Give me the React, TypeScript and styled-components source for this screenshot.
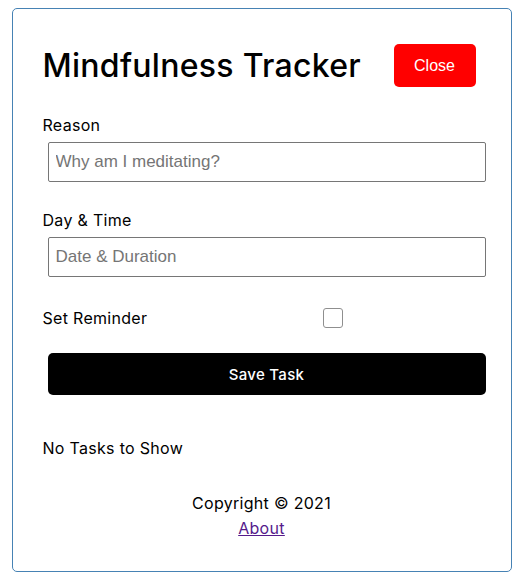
import React from "react";
import styled, { createGlobalStyle } from "styled-components";

const GlobalStyle = createGlobalStyle`
  * { box-sizing: border-box; }
  body {
    margin: 0;
    background: #ffffff;
    font-family: Inter, "Open Sans", sans-serif;
    color: #000000;
  }
`;

const Container = styled.div`
  width: 500px;
  margin: 8px auto 0;
  border: 1px solid steelblue;
  border-radius: 5px;
  padding: 30px;
`;

const Header = styled.header`
  display: flex;
  justify-content: space-between;
  align-items: center;
  height: 43px;
  margin: 5px 0 26px;
`;

const Title = styled.h1`
  margin: 0;
  font-size: 32px;
  font-weight: 500;
  line-height: 43px;
  letter-spacing: 0.28px;
`;

const Button = styled.button<{ $bg: string; $block?: boolean }>`
  border: none;
  border-radius: 5px;
  background: ${(p) => p.$bg};
  color: #ffffff;
  cursor: pointer;
  ${(p) =>
    p.$block
      ? `
    display: block;
    width: 438px;
    height: 42px;
    margin: 0 0 0 5px;
    font-family: inherit;
    font-size: 15px;
    font-weight: 500;
    letter-spacing: 0.3px;
  `
      : `
    width: 82px;
    height: 43px;
    margin: 0 5px 0 0;
    font-family: "Liberation Sans", Arial, sans-serif;
    font-size: 16px;
  `}
`;

const Form = styled.form`
  margin-bottom: 41px;
`;

const FormControl = styled.div`
  display: flow-root;
  margin-bottom: 21px;
`;

const Label = styled.label`
  display: block;
  font-size: 16px;
  line-height: 24px;
  letter-spacing: 0.3px;
`;

const TextInput = styled.input`
  display: block;
  width: 438px;
  height: 40px;
  margin: 5px 0 5px 5px;
  padding: 3px 7px;
  border: 1px solid #767676;
  border-radius: 2px;
  font-family: "Liberation Sans", Arial, sans-serif;
  font-size: 17px;
  &::placeholder {
    color: #757575;
  }
`;

const CheckRow = styled.div`
  display: flex;
  align-items: center;
  height: 30px;
  margin: 20px 0;
`;

const CheckLabel = styled(Label)`
  flex: 1;
`;

const CheckCell = styled.div`
  flex: 2;
  display: flex;
  justify-content: center;
  padding-right: 2px;
`;

const CheckBox = styled.input`
  appearance: none;
  width: 20px;
  height: 20px;
  margin: 0;
  border: 1px solid #8f8f8f;
  border-radius: 3px;
  background: #ffffff;
`;

const Text = styled.p`
  margin: 0;
  font-size: 16px;
  line-height: 24px;
  letter-spacing: 0.3px;
`;

const Footer = styled.footer`
  margin-top: 31px;
  padding-bottom: 1px;
  text-align: center;
  font-size: 16px;
  letter-spacing: 0.3px;
`;

const Copy = styled.p`
  margin: 0;
  line-height: 25px;
`;

const Link = styled.a`
  display: inline-block;
  line-height: 24px;
  color: #551a8b;
  text-decoration: underline;
`;

export default function App() {
  return (
    <>
      <GlobalStyle />
      <Container>
        <Header>
          <Title>Mindfulness Tracker</Title>
          <Button $bg="#ff0000">Close</Button>
        </Header>
        <Form onSubmit={(e) => e.preventDefault()}>
          <FormControl>
            <Label>Reason</Label>
            <TextInput type="text" placeholder="Why am I meditating?" />
          </FormControl>
          <FormControl>
            <Label>Day &amp; Time</Label>
            <TextInput type="text" placeholder="Date &amp; Duration" />
          </FormControl>
          <CheckRow>
            <CheckLabel>Set Reminder</CheckLabel>
            <CheckCell>
              <CheckBox type="checkbox" />
            </CheckCell>
          </CheckRow>
          <Button $bg="#000000" $block type="submit">
            Save Task
          </Button>
        </Form>
        <Text>No Tasks to Show</Text>
        <Footer>
          <Copy>Copyright © 2021</Copy>
          <Link href="#about">About</Link>
        </Footer>
      </Container>
    </>
  );
}
